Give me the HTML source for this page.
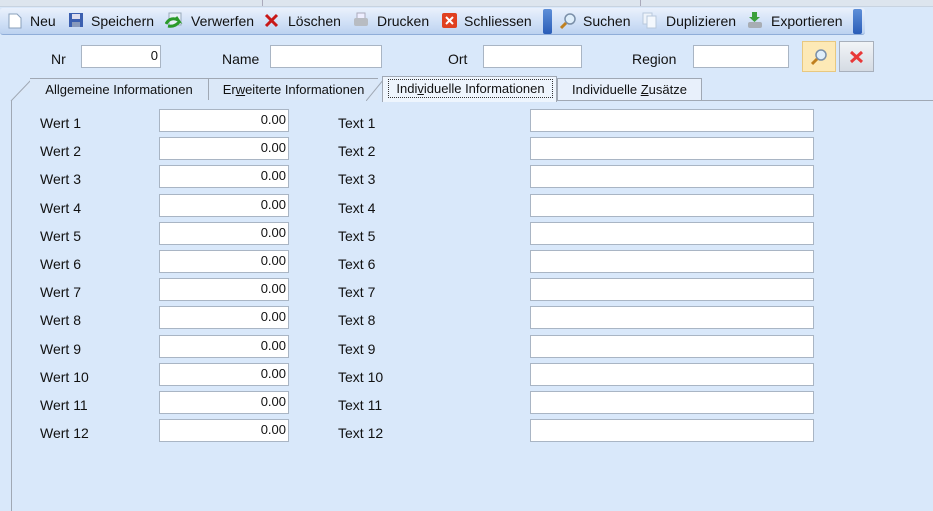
<!DOCTYPE html>
<html><head><meta charset="utf-8"><style>
*{margin:0;padding:0;box-sizing:border-box}
body{width:933px;height:511px;overflow:hidden;background:#d9e8fa;font-family:"Liberation Sans",sans-serif;font-size:14px;color:#111;position:relative}
.a{position:absolute;white-space:nowrap}
.top{left:0;top:0;width:933px;height:7px;background:#dde5ee;border-bottom:1px solid #c8d3e0}
.tb{left:0;top:8px;width:865px;height:27px;background:linear-gradient(#eaf1fc,#d3e2f7 50%,#bcd2f0);border-bottom:1px solid #8fadd8;border-radius:3px}
.tbi{top:13px;font-size:14px}
.inp{position:absolute;background:#fff;border:1px solid #a9b5c4;height:23px;text-align:right;padding:2px 2px 0 0;font-size:13px}
.lbl{position:absolute;font-size:14px}
.tab{position:absolute;top:78px;height:22px;border:1px solid #a0a8b4;border-bottom:none;background:#dbe8f8;font-size:13px;padding:3px 0 0 0;text-align:center}
.gr{position:absolute;width:9px;height:25px;background:linear-gradient(#5e8fd8,#2a5db8);border-radius:2px}
</style></head><body>
<div class="a top"></div>
<div class="a" style="left:262px;top:0;width:1px;height:6px;background:#aab"></div>
<div class="a" style="left:640px;top:0;width:1px;height:6px;background:#aab"></div>
<div class="a tb"></div>
<div class="gr" style="left:543px;top:9px"></div>
<div class="gr" style="left:853px;top:9px"></div>
<!-- icons -->
<svg class="a" style="left:8px;top:13px" width="14" height="16"><path d="M1 1h8l4 4v10H1z" fill="#fff" stroke="#8aa0bb"/></svg>
<span class="a tbi" style="left:30px">Neu</span>
<svg class="a" style="left:68px;top:12px" width="16" height="16"><rect x="1" y="1" width="14" height="14" fill="#3b5fb0"/><rect x="4" y="2" width="8" height="5" fill="#dde"/><rect x="4" y="10" width="8" height="5" fill="#8899bb"/></svg>
<span class="a tbi" style="left:91px">Speichern</span>
<svg class="a" style="left:165px;top:12px" width="18" height="16"><rect x="4" y="1" width="12" height="12" fill="#e8f0f8" stroke="#9ab"/><path d="M1 12c3-6 8-6 12-4l-2-3M3 14c5 1 9-1 12-5" stroke="#2a9a2a" stroke-width="3" fill="none"/></svg>
<span class="a tbi" style="left:191px">Verwerfen</span>
<svg class="a" style="left:264px;top:13px" width="15" height="15"><path d="M2 2l11 11M13 2L2 13" stroke="#c81818" stroke-width="3"/></svg>
<span class="a tbi" style="left:288px">Löschen</span>
<svg class="a" style="left:352px;top:12px" width="18" height="17"><rect x="5" y="1" width="8" height="6" fill="#eef" stroke="#aab"/><rect x="2" y="6" width="14" height="8" rx="2" fill="#b8bcc2"/></svg>
<span class="a tbi" style="left:377px">Drucken</span>
<svg class="a" style="left:442px;top:13px" width="15" height="15"><rect width="15" height="15" rx="2" fill="#e04020"/><path d="M4 4l7 7M11 4l-7 7" stroke="#fff" stroke-width="2"/></svg>
<span class="a tbi" style="left:464px">Schliessen</span>
<svg class="a" style="left:559px;top:12px" width="18" height="18"><circle cx="11" cy="7" r="5" fill="#dfeefa" stroke="#7a8fa8" stroke-width="1.5"/><path d="M7 11l-5 5" stroke="#c08020" stroke-width="3"/></svg>
<span class="a tbi" style="left:583px">Suchen</span>
<svg class="a" style="left:642px;top:12px" width="16" height="17"><rect x="1" y="1" width="9" height="11" fill="#eef3fa" stroke="#b8c8dc"/><rect x="5" y="4" width="9" height="12" fill="#f4f8fd" stroke="#b8c8dc"/></svg>
<span class="a tbi" style="left:666px">Duplizieren</span>
<svg class="a" style="left:746px;top:11px" width="18" height="18"><path d="M6 1h5v5h3l-5.5 5L3 6h3z" fill="#3ba03b"/><rect x="2" y="11" width="14" height="6" rx="2" fill="#a8adb4"/></svg>
<span class="a tbi" style="left:771px">Exportieren</span>
<!-- search row -->
<span class="lbl" style="left:51px;top:51px">Nr</span>
<div class="inp" style="left:81px;top:45px;width:80px">0</div>
<span class="lbl" style="left:222px;top:51px">Name</span>
<div class="inp" style="left:270px;top:45px;width:112px"></div>
<span class="lbl" style="left:448px;top:51px">Ort</span>
<div class="inp" style="left:483px;top:45px;width:99px"></div>
<span class="lbl" style="left:632px;top:51px">Region</span>
<div class="inp" style="left:693px;top:45px;width:96px"></div>
<div class="a" style="left:802px;top:41px;width:34px;height:31px;background:#fde9b6;border:1px solid #e8c880"></div>
<svg class="a" style="left:809px;top:47px" width="20" height="20"><circle cx="12" cy="8" r="5" fill="#dfeefa" stroke="#7a8fa8" stroke-width="1.5"/><path d="M8 12l-5 5" stroke="#c08020" stroke-width="3"/></svg>
<div class="a" style="left:839px;top:41px;width:35px;height:31px;background:linear-gradient(#f2f4f7,#d5dbe3);border:1px solid #a8b0bc"></div>
<svg class="a" style="left:849px;top:50px" width="15" height="14"><path d="M2 2l11 10M13 2L2 12" stroke="#e83838" stroke-width="3"/></svg>
<!-- tabs -->
<svg class="a" style="left:10px;top:77px" width="30" height="24"><path d="M1 24L22 2h8" stroke="#a0a8b4" fill="#dbe8f8"/></svg>
<div class="tab" style="left:30px;width:179px;border-left:none">Allgemeine Informationen</div>
<div class="tab" style="left:208px;width:170px;border-right:none">Er<u>w</u>eiterte Informationen</div>
<svg class="a" style="left:366px;top:77px" width="20" height="24"><path d="M0 24L18 2" stroke="#a0a8b4"/></svg>
<div class="a" style="left:382px;top:76px;width:175px;height:26px;background:#eef5fd;border:1px solid #a0a8b4;border-bottom:none"></div>
<div class="a" style="left:388px;top:79px;width:165px;height:19px;border:1px dotted #333;font-size:13px;text-align:center;padding-top:1px">Indi<u>v</u>iduelle Informationen</div>
<div class="tab" style="left:557px;width:145px;background:#e8f0fb">Individuelle <u>Z</u>usätze</div>
<div class="a" style="left:556px;top:100px;width:377px;height:1px;background:#a0a8b4"></div>
<div class="a" style="left:11px;top:100px;width:1px;height:411px;background:#a0a8b4"></div>
<!-- rows -->
<div id="rows"></div>
<script>
var h='';for(var i=0;i<12;i++){var y=109+i*28.2;
h+='<span class="lbl" style="left:40px;top:'+(y+6)+'px">Wert '+(i+1)+'</span>';
h+='<div class="inp" style="left:159px;top:'+y+'px;width:130px">0.00</div>';
h+='<span class="lbl" style="left:338px;top:'+(y+6)+'px">Text '+(i+1)+'</span>';
h+='<div class="inp" style="left:530px;top:'+y+'px;width:284px"></div>';}
document.getElementById('rows').innerHTML=h;
</script>
</body></html>
